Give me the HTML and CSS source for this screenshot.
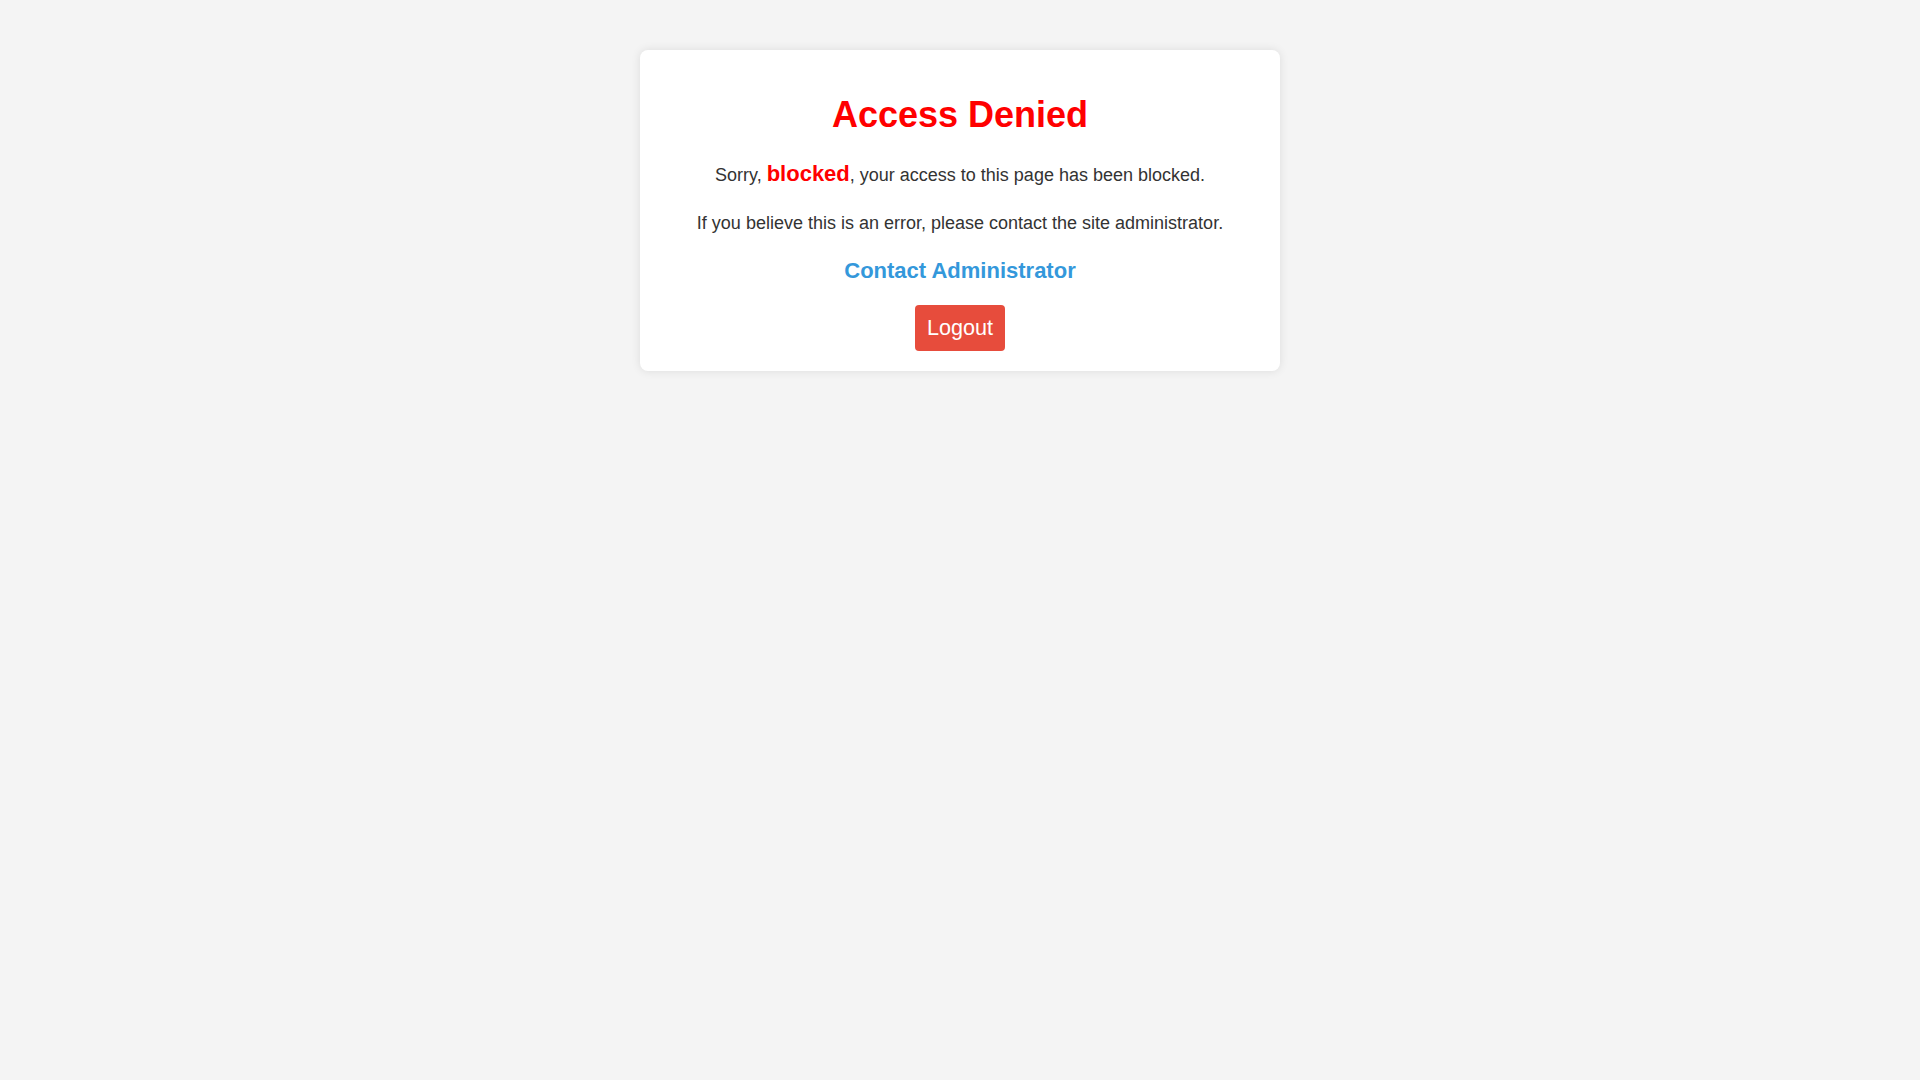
FILE: index.html
```html
<!DOCTYPE html>
<html lang="en">
<head>
<meta charset="utf-8">
<title>Access Denied</title>
<link rel="stylesheet" href="styles.css">
</head>
<body>
<div class="card">
  <h1 class="title">Access Denied</h1>
  <p class="msg">Sorry, <span class="user">blocked</span>, your access to this page has been blocked.</p>
  <p class="msg">If you believe this is an error, please contact the site administrator.</p>
  <p class="msg-contact"><a class="contact" href="#">Contact Administrator</a></p>
  <button class="logout" type="button">Logout</button>
</div>
</body>
</html>
```
FILE: styles.css
```css
html, body {
  margin: 0;
  padding: 0;
}
body {
  background: #f4f4f4;
  font-family: "Liberation Sans", Arial, sans-serif;
  color: #333;
}
.card {
  width: 600px;
  margin: 50px auto;
  padding: 20px;
  background: #fff;
  border-radius: 8px;
  box-shadow: 0 0 10px rgba(0, 0, 0, 0.1);
  text-align: center;
}
.title {
  color: #ff0000;
  font-size: 36px;
  font-weight: bold;
  margin: 24px 0 20px;
}
.msg {
  font-size: 18px;
  line-height: 1.6;
  margin: 18px 0;
}
.msg-contact {
  font-size: 22px;
  line-height: 30px;
  margin: 18px 0 19px;
}
.user {
  color: #ff0000;
  font-weight: bold;
  font-size: 22px;
}
.contact {
  color: #3498db;
  font-weight: bold;
  text-decoration: none;
}
.logout {
  background: #e74c3c;
  color: #fff;
  border: none;
  border-radius: 4px;
  padding: 10px 12px;
  font-family: "Liberation Sans", Arial, sans-serif;
  font-size: 21.6px;
  cursor: pointer;
}
```
